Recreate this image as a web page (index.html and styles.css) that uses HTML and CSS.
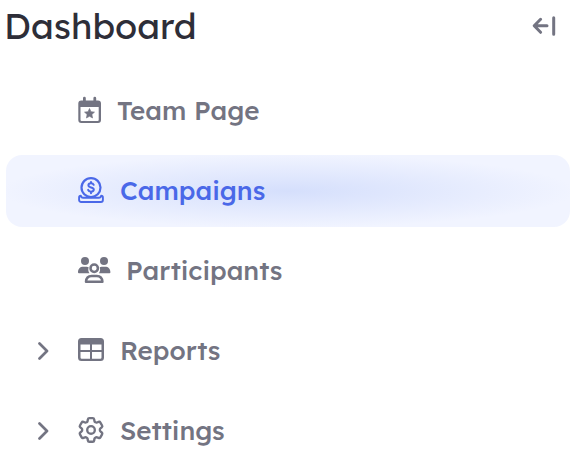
FILE: index.html
```html
<!DOCTYPE html>
<html lang="en">
<head>
<meta charset="utf-8">
<meta name="viewport" content="width=device-width, initial-scale=1">
<title>Dashboard</title>
<link rel="stylesheet" href="styles.css">
</head>
<body>
<aside class="sidebar">
  <header class="header">
    <h1 class="title">Dashboard</h1>
    <button class="collapse" type="button" aria-label="Collapse sidebar">
      <svg width="24" height="20" viewBox="0 0 24 20" fill="none" stroke="currentColor" stroke-width="3" stroke-linecap="round" stroke-linejoin="round">
        <path d="M15 9.800H2.500M8.600 3.300L2.200 9.800l6.400 6.500M21.700 1.800v16.400"/>
      </svg>
    </button>
  </header>
  <nav aria-label="Dashboard">
    <ul class="menu">
      <li class="item">
        <a class="link" href="#team">
          <svg width="23" height="28" viewBox="0 0 23 28" fill="currentColor">
            <path fill-rule="evenodd" d="M5 1.200a1.300 1.300 0 0 1 2.800 0V3.600h7.600V1.200a1.300 1.300 0 0 1 2.800 0V3.600H20a3 3 0 0 1 3 3V23a3 3 0 0 1-3 3H3.300a3 3 0 0 1-3-3V6.600a3 3 0 0 1 3-3H5zM2.500 10v13a1 1 0 0 0 1 1h16.200a1 1 0 0 0 1-1V10z"/>
            <path stroke="currentColor" stroke-width=".6" stroke-linejoin="round" d="M11.500 11.500l1.500 3.200 3.500.4-2.600 2.400.7 3.500-3.100-1.700-3.100 1.700.7-3.500-2.600-2.400 3.500-.4z"/>
          </svg>
          <span>Team Page</span>
        </a>
      </li>
      <li class="item active">
        <a class="link" href="#campaigns" aria-current="page">
          <svg width="26" height="28" viewBox="0 0 26 28" fill="none" stroke="currentColor" stroke-width="2.200" stroke-linecap="round" stroke-linejoin="round">
            <circle cx="13" cy="10.600" r="9.500"/>
            <path d="M2.800 18.600C1.600 18.600 1.100 19.300 1.100 20.500V23a2 2 0 0 0 2 2h19.800a2 2 0 0 0 2-2v-2.500c0-1.200-.5-1.900-1.700-1.900-.2 1.600-1.200 2.100-2.500 2.100H5.300c-1.300 0-2.300-.5-2.500-2.100z" stroke-width="1.900"/>
            <path d="M15.700 7.800c-.5-1.100-1.400-1.500-2.700-1.500-1.600 0-2.600.7-2.600 2 0 3 5.400 1.300 5.400 4.300 0 1.400-1.200 2.100-2.800 2.100-1.500 0-2.500-.6-2.900-1.800M13 4.900v1.200M13 15v1.200" stroke-width="2"/>
          </svg>
          <span>Campaigns</span>
        </a>
      </li>
      <li class="item">
        <a class="link" href="#participants">
          <svg width="32" height="28" viewBox="0 0 32 28" fill="currentColor">
            <circle cx="7" cy="4" r="4"/>
            <circle cx="26" cy="4" r="4"/>
            <path d="M0 15.300c0-3.700 2.100-5.600 5.200-5.600h3.600c.8 0 1.300.2 1.900.5-.8 2.200-.4 4.400.8 6H.9c-.6 0-.9-.3-.9-.9zM32.400 15.300c0-3.700-2.100-5.600-5.200-5.600h-3.600c-.8 0-1.300.2-1.900.5.8 2.200.4 4.400-.8 6h10.600c.6 0 .9-.3.9-.9z"/>
            <circle cx="16.200" cy="11.300" r="3.700" fill="none" stroke="currentColor" stroke-width="2.500"/>
            <path d="M8 24.700c.2-3.500 2.300-5.800 5.600-5.800h5.200c3.300 0 5.400 2.300 5.600 5.800z" fill="none" stroke="currentColor" stroke-width="2.500" stroke-linejoin="round"/>
          </svg>
          <span>Participants</span>
        </a>
      </li>
      <li class="item">
        <button class="toggle" type="button" aria-label="Expand Reports" aria-expanded="false">
          <svg width="12" height="20" viewBox="0 0 12 20" fill="none" stroke="currentColor" stroke-width="2.700" stroke-linecap="round" stroke-linejoin="round"><path d="M1.500 2.500L9 10l-7.500 7.500"/></svg>
        </button>
        <a class="link" href="#reports">
          <svg width="26" height="28" viewBox="0 0 26 28" fill="currentColor">
            <path fill-rule="evenodd" d="M3.500 1h19A3.500 3.500 0 0 1 26 4.500v16a3.500 3.500 0 0 1-3.500 3.500h-19A3.500 3.500 0 0 1 0 20.500v-16A3.500 3.500 0 0 1 3.500 1zM2.500 7.500V13H12V7.500zM14 7.500V13h9.500V7.500zM2.500 15v5.500a1.200 1.200 0 0 0 1.200 1.200H12V15zM14 15v6.700h8.300a1.200 1.200 0 0 0 1.200-1.200V15z"/>
          </svg>
          <span>Reports</span>
        </a>
      </li>
      <li class="item">
        <button class="toggle" type="button" aria-label="Expand Settings" aria-expanded="false">
          <svg width="12" height="20" viewBox="0 0 12 20" fill="none" stroke="currentColor" stroke-width="2.700" stroke-linecap="round" stroke-linejoin="round"><path d="M1.500 2.500L9 10l-7.500 7.500"/></svg>
        </button>
        <a class="link" href="#settings">
          <svg width="26" height="28" viewBox="0 0 26 28" fill="none" stroke="currentColor">
            <g transform="translate(-2.700 -2.800) scale(1.310)" stroke-width="1.800" stroke-linejoin="round">
              <path d="M9.594 3.940c.09-.542.56-.94 1.110-.94h2.593c.55 0 1.020.398 1.110.94l.213 1.281c.063.374.313.686.645.87.074.04.147.083.22.127.325.196.72.257 1.075.124l1.217-.456a1.125 1.125 0 0 1 1.370.49l1.296 2.247a1.125 1.125 0 0 1-.26 1.431l-1.003.827c-.293.241-.438.613-.43.992a7.723 7.723 0 0 1 0 .255c-.008.378.137.75.43.991l1.004.827c.424.35.534.955.26 1.430l-1.298 2.247a1.125 1.125 0 0 1-1.369.491l-1.217-.456c-.355-.133-.75-.072-1.076.124a6.470 6.470 0 0 1-.22.128c-.331.183-.581.495-.644.869l-.213 1.281c-.09.543-.56.94-1.110.94h-2.594c-.55 0-1.019-.398-1.110-.94l-.213-1.281c-.062-.374-.312-.686-.644-.87a6.520 6.520 0 0 1-.22-.127c-.325-.196-.72-.257-1.076-.124l-1.217.456a1.125 1.125 0 0 1-1.369-.49l-1.297-2.247a1.125 1.125 0 0 1 .26-1.431l1.004-.827c.292-.24.437-.613.43-.991a6.932 6.932 0 0 1 0-.255c.007-.38-.138-.751-.43-.992l-1.004-.827a1.125 1.125 0 0 1-.26-1.430l1.297-2.247a1.125 1.125 0 0 1 1.370-.491l1.216.456c.356.133.751.072 1.076-.124.072-.044.146-.086.22-.128.332-.183.582-.495.644-.869l.214-1.280Z"/>
              <circle cx="12" cy="12" r="2.900"/>
            </g>
          </svg>
          <span>Settings</span>
        </a>
      </li>
    </ul>
  </nav>
</aside>
</body>
</html>
```
FILE: styles.css
```css
* {
  box-sizing: border-box;
}

body {
  margin: 0;
  background: #fff;
  color: #737482;
  font-family: Lexend, Inter, "Liberation Sans", sans-serif;
}

.sidebar {
  padding: 6px 8px 7px 4px;
}

.header {
  display: flex;
  align-items: center;
  justify-content: space-between;
  height: 40px;
  padding-right: 14px;
  margin-bottom: 29px;
}

.title {
  margin: 0;
  color: #2e2e38;
  font-size: 36px;
  font-weight: 400;
  line-height: 40px;
}

.collapse,
.toggle {
  display: flex;
  align-items: center;
  padding: 0;
  border: 0;
  background: none;
  color: inherit;
  cursor: pointer;
}

.menu {
  display: grid;
  gap: 8px;
  margin: 0;
  padding: 0 0 0 2px;
  list-style: none;
}

.item {
  display: grid;
  grid-template-columns: 40px 1fr;
  align-items: center;
  height: 72px;
  padding-left: 32px;
  border-radius: 16px;
}

.active {
  background: radial-gradient(ellipse at center, #d5dffc 0%, #f1f4ff 72%);
  color: #4a68e8;
}

.link {
  display: flex;
  grid-column: 2;
  align-items: center;
  gap: 16px;
  color: inherit;
  font-size: 26px;
  font-weight: 500;
  line-height: 32px;
  text-decoration: none;
}

.link svg {
  flex: none;
  overflow: visible;
}
```
